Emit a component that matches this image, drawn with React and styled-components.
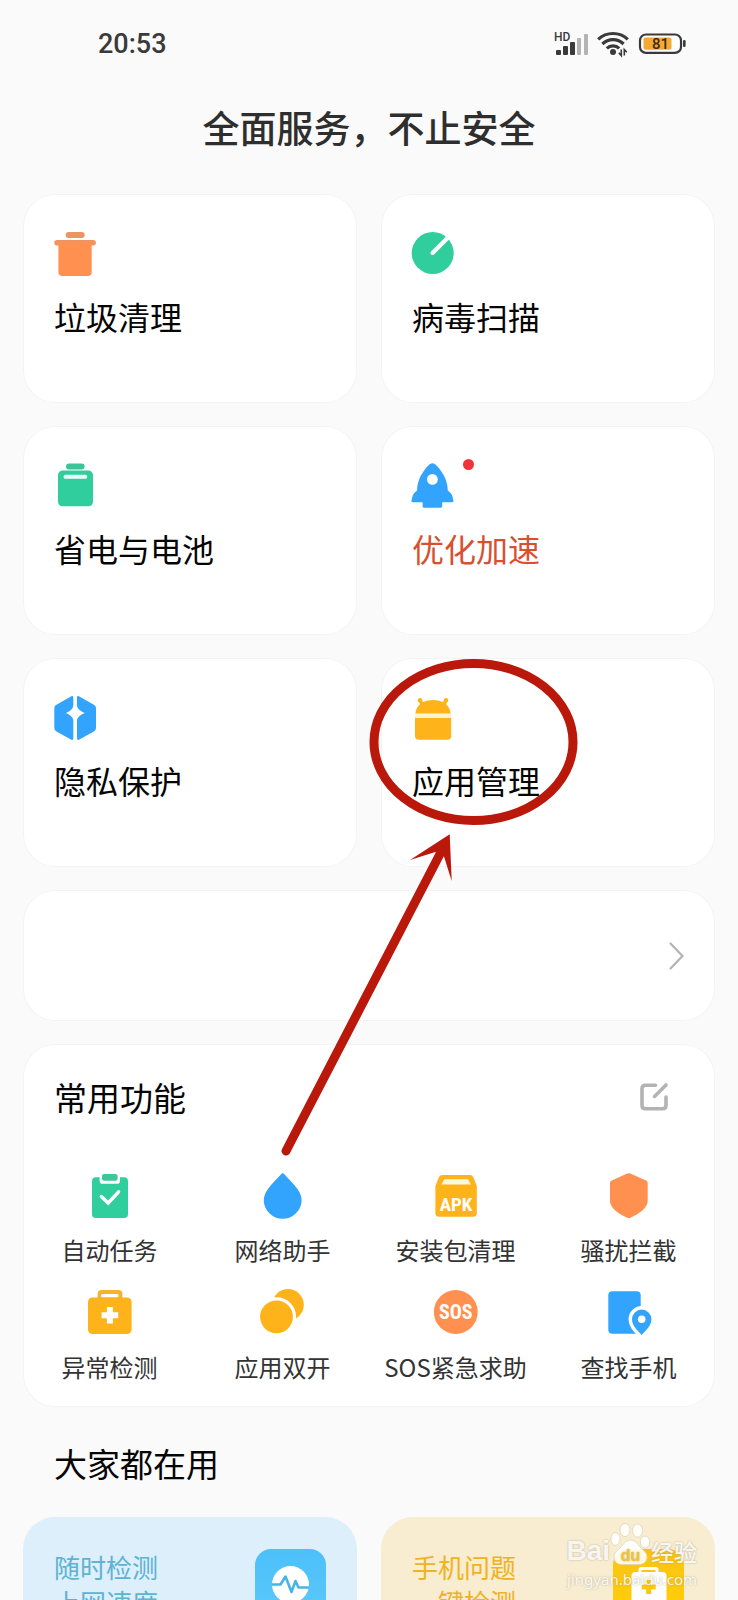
import React from "react";
import styled, { createGlobalStyle } from "styled-components";

const colors = {
  page: "#fafafa",
  card: "#ffffff",
  line: "#f3f3f3",
  ink: "#050505",
  label: "#333333",
  orange: "#ff904f",
  green: "#2fce9c",
  blue: "#33a4fd",
  yellow: "#ffb31a",
  grey: "#b3b3b3",
  mark: "#b9180b",
};

const GlobalStyle = createGlobalStyle`
  *, *::before, *::after { box-sizing: border-box; }
  body {
    margin: 0;
    background: ${colors.page};
    font-family: "Noto Sans CJK SC", sans-serif;
    color: ${colors.ink};
  }
  button { font: inherit; color: inherit; border: 0; background: none; padding: 0; cursor: pointer; }
  a { color: inherit; text-decoration: none; }
  svg { display: block; overflow: visible; }
`;

const Screen = styled.div`
  position: relative;
  height: 100vh;
  overflow: hidden;
  padding-top: 28px;
`;

const StatusBar = styled.header`
  display: flex;
  align-items: center;
  justify-content: space-between;
  height: 32px;
  padding: 0 52px 0 98px;
`;

const Clock = styled.time`
  font: 500 27px/32px Roboto, sans-serif;
  color: #3a3a3a;
`;

const StatusIcons = styled.div`
  display: flex;
  align-items: center;
  gap: 9px;
`;

const Title = styled.h1`
  margin: 41px 0;
  font-size: 37px;
  line-height: 52px;
  font-weight: 500;
  text-align: center;
  color: #2e2e2e;
`;

const Main = styled.main`
  position: relative;
  padding: 0 23px;
`;

const TileGrid = styled.div`
  display: grid;
  grid-template-columns: 1fr 1fr;
  gap: 23px 24px;
`;

const Tile = styled.button`
  display: flex;
  flex-direction: column;
  align-items: flex-start;
  gap: 17px;
  min-height: 209px;
  padding: 37px 31px;
  background: ${colors.card};
  box-shadow: inset 0 0 0 1px ${colors.line};
  border-radius: 32px;
  text-align: left;
`;

const TileIcon = styled.span`
  position: relative;
  width: 46px;
  height: 46px;
`;

const Dot = styled.span`
  position: absolute;
  left: 51px;
  top: -4px;
  width: 11px;
  height: 11px;
  border-radius: 50%;
  background: #f0343a;
`;

const TileLabel = styled.span`
  font-size: 32px;
  line-height: 44px;
  color: ${(p) => (p.$alert ? "#d8502f" : colors.ink)};
`;

const Banner = styled.a`
  display: flex;
  align-items: center;
  justify-content: flex-end;
  height: 131px;
  margin-top: 23px;
  padding: 0 31px;
  background: ${colors.card};
  box-shadow: inset 0 0 0 1px ${colors.line};
  border-radius: 32px;
`;

const Panel = styled.section`
  margin-top: 23px;
  padding: 31px 0 25px;
  background: ${colors.card};
  box-shadow: inset 0 0 0 1px ${colors.line};
  border-radius: 32px;
`;

const PanelHeader = styled.div`
  display: flex;
  align-items: center;
  justify-content: space-between;
  margin-bottom: 53px;
  padding: 0 47px 0 31px;
`;

const SectionTitle = styled.h2`
  margin: 0;
  font-size: 33px;
  line-height: 44px;
  font-weight: 400;
`;

const ShortcutGrid = styled.div`
  display: grid;
  grid-template-columns: repeat(4, 1fr);
  row-gap: 24px;
`;

const Shortcut = styled.button`
  display: flex;
  flex-direction: column;
  align-items: center;
  gap: 17px;
`;

const ShortcutLabel = styled.span`
  font-size: 24px;
  line-height: 30px;
  color: ${colors.label};
  white-space: nowrap;
`;

const PopularHeader = styled.div`
  padding: 34px 31px 32px;
`;

const PromoGrid = styled.div`
  display: grid;
  grid-template-columns: 1fr 1fr;
  gap: 24px;
`;

const Promo = styled.a`
  display: flex;
  justify-content: space-between;
  align-items: flex-start;
  padding: 32px 31px;
  min-height: 200px;
  border-radius: 32px;
  background: ${(p) => p.$background};
  color: ${(p) => p.$color};
`;

const PromoText = styled.span`
  font-size: 26px;
  line-height: 35px;
`;

const PromoIcon = styled.span`
  width: 71px;
  height: 71px;
  border-radius: 16px;
  background: ${(p) => p.$fill};
`;

const Annotation = styled.svg`
  position: absolute;
  left: 50%;
  top: 0;
  pointer-events: none;
`;

const Watermark = styled.div`
  position: absolute;
  right: 41px;
  bottom: 7px;
  display: flex;
  flex-direction: column;
  align-items: flex-end;
  color: rgba(255, 255, 255, 0.9);
  text-shadow: 0 0 2px rgba(150, 140, 110, 0.7);
  pointer-events: none;
`;

const WatermarkRow = styled.div`
  display: flex;
  align-items: flex-end;
`;

const WatermarkLatin = styled.span`
  font: 700 28px/28px "Liberation Sans", sans-serif;
`;

const WatermarkHan = styled.span`
  font-size: 23px;
  line-height: 28px;
  font-weight: 500;
`;

const WatermarkUrl = styled.span`
  font: 400 15px/28px "Noto Sans", sans-serif;
`;

function Signal() {
  return (
    <svg width="34" height="24" viewBox="0 0 34 24" role="img" aria-label="HD">
      <text x="0" y="9" fontFamily="Roboto, sans-serif" fontSize="12" fontWeight="500" fill="#3a3a3a">HD</text>
      <g fill="#3a3a3a">
        <rect x="2" y="18" width="5" height="5" rx="1" />
        <rect x="9" y="14" width="5" height="9" rx="1" />
        <rect x="16" y="10" width="5" height="13" rx="1" />
      </g>
      <g fill="#b4b4b4">
        <rect x="23" y="6" width="4" height="17" rx="1" />
        <rect x="30" y="2" width="4" height="21" rx="1" />
      </g>
    </svg>
  );
}

function Wifi() {
  return (
    <svg width="32" height="24" viewBox="0 0 32 24" aria-hidden="true">
      <g fill="none" stroke="#3a3a3a" strokeWidth="3.2">
        <path d="M1.2 7.4 A21.5 21.5 0 0 1 30.8 7.4" />
        <path d="M5.4 12 A15 15 0 0 1 26.6 12" />
        <path d="M9.8 16.4 A8.8 8.8 0 0 1 22.2 16.4" />
      </g>
      <circle cx="16" cy="20" r="3" fill="#3a3a3a" />
      <path d="M24.3 17.5 V23.6 L21.8 20.8 M27.3 23.6 V17.5 L29.8 20.3" fill="none" stroke="#3a3a3a" strokeWidth="1.6" />
    </svg>
  );
}

function Battery() {
  return (
    <svg width="48" height="22" viewBox="0 0 48 22" role="img" aria-label="81">
      <rect x="2" y="1.5" width="41" height="18.4" rx="6" fill="#fff" stroke="#3a3a3a" strokeWidth="2.2" />
      <rect x="5.5" y="4.6" width="28" height="12.2" rx="2" fill="#f4a935" />
      <rect x="45" y="7" width="2.6" height="7" rx="1.2" fill="#3a3a3a" />
      <text x="22.5" y="16" textAnchor="middle" fontFamily="Roboto, sans-serif" fontSize="15" fontWeight="500" fill="#3c2a10">81</text>
    </svg>
  );
}

const Icon46 = ({ children }) => (
  <svg width="46" height="46" viewBox="0 0 46 46" aria-hidden="true">{children}</svg>
);

const Trash = () => (
  <Icon46>
    <rect x="11.7" y="1" width="19" height="6" rx="3" fill="#ee9363" />
    <rect x="0.3" y="9" width="41.6" height="5.5" rx="2.7" fill="#f2935f" />
    <path d="M4.4 12 H37.7 V41 Q37.7 45 33.7 45 H8.4 Q4.4 45 4.4 41 Z" fill={colors.orange} />
  </Icon46>
);

const Scan = () => (
  <Icon46>
    <circle cx="20.7" cy="22" r="21" fill={colors.green} />
    <path d="M20.5 22 L38 4.5" stroke="#fff" strokeWidth="4.2" />
    <circle cx="20.5" cy="22" r="2.1" fill="#fff" />
  </Icon46>
);

const Power = () => (
  <Icon46>
    <rect x="12" y="0.5" width="18.6" height="6" rx="3" fill="#3bc495" />
    <rect x="4" y="7.6" width="35" height="35.6" rx="4.5" fill={colors.green} />
    <rect x="9.7" y="11.7" width="23.4" height="4" rx="1.5" fill="#e8fff7" />
  </Icon46>
);

const Rocket = () => (
  <Icon46>
    <path
      d="M20.4 0.3 C22 0.3 24 1.6 26.6 4.8 C32.5 12 35.6 19 35.8 27.5 C38.5 29.5 40 31 40.6 34 L41.5 38 Q41.4 39.2 40 39.2 H30.2 V43.4 Q30 44.7 28.6 44.7 H12 Q10.7 44.7 10.6 43.4 V39.2 H0.8 Q-0.7 39.2 -0.6 38 L0.3 34 C0.9 31 2.4 29.5 5.1 27.5 C5.3 19 8.3 12 14.2 4.8 C16.8 1.6 18.8 0.3 20.4 0.3 Z"
      fill={colors.blue}
    />
    <circle cx="20.4" cy="16.4" r="5.4" fill="#fff" />
  </Icon46>
);

const Privacy = () => (
  <Icon46>
    <g fill={colors.blue}>
      <path d="M19.3 2 V11 Q18.6 15 12 18 Q18.6 21 19.3 25 V43.8 Q19 45.4 17.4 44.8 L2 36.2 Q0.3 35 0.3 33 V13 Q0.3 11 2 10 L17.4 1.2 Q19 0.6 19.3 2 Z" />
      <path d="M23 2 V11 Q23.7 15 30.7 18 Q23.7 21 23 25 V43.8 Q23.3 45.4 24.9 44.8 L40.3 36.2 Q42 35 42 33 V13 Q42 11 40.3 10 L24.9 1.2 Q23.3 0.6 23 2 Z" />
    </g>
  </Icon46>
);

const Android = () => (
  <Icon46>
    <g fill={colors.yellow}>
      <path d="M3.3 18.7 C3.6 14 6 10.5 9.5 8 C16 4 26 4 32.5 8 C36 10.5 38.4 14 38.7 18.7 Z" />
      <path d="M3 22.7 H39.2 V41 Q39.2 44.8 35.4 44.8 H6.8 Q3 44.8 3 41 Z" />
      <circle cx="8" cy="5.2" r="2.2" />
      <circle cx="34" cy="5.2" r="2.2" />
    </g>
    <path d="M8 5.2 L10.5 10 M34 5.2 L31.5 10" stroke={colors.yellow} strokeWidth="3.6" />
    <rect x="3" y="18.7" width="36.2" height="4" fill="#fff3d3" />
  </Icon46>
);

const Tasks = () => (
  <Icon46>
    <rect x="5" y="5.3" width="36" height="40.6" rx="4" fill={colors.green} />
    <path d="M12.6 4.5 H33 V8.7 Q33 11.8 30 11.8 H15.6 Q12.6 11.8 12.6 8.7 Z" fill="#fff" />
    <rect x="15" y="2" width="15.6" height="6.8" rx="2" fill="#3cc798" />
    <path d="M14.3 24.5 L21.2 31 L31.6 19.8" fill="none" stroke="#fff" strokeWidth="3.4" strokeLinecap="round" />
  </Icon46>
);

const Drop = () => (
  <Icon46>
    <path
      d="M22.7 1.3 Q23.5 1.3 24.3 2.2 C29 7 34 12 37.8 17.5 C40.4 21.5 41.6 24.5 41.6 28.2 A18.9 18.6 0 0 1 3.8 28.2 C3.8 24.5 5 21.5 7.6 17.5 C11.4 12 16.4 7 21.1 2.2 Q21.9 1.3 22.7 1.3 Z"
      fill={colors.blue}
    />
  </Icon46>
);

const badgeText = {
  fontFamily: '"Liberation Sans Narrow", "Roboto Condensed", "Liberation Sans", sans-serif',
  fontWeight: 700,
  fill: "#fff",
  textAnchor: "middle",
};

const Apk = () => (
  <Icon46>
    <path d="M9.5 3 H36.8 Q39.4 3 40.3 5 L43.8 14 V41 Q43.8 44.8 40 44.8 H6.2 Q2.4 44.8 2.4 41 V14 L6 5 Q6.9 3 9.5 3 Z" fill={colors.yellow} />
    <path d="M11.3 7.2 H35 L38 12.4 H8.3 Z" fill="#fff7dc" />
    <text x="23" y="39" fontSize="19" {...badgeText}>APK</text>
  </Icon46>
);

const Shield = () => (
  <Icon46>
    <path d="M21.2 1.6 Q22.8 0.8 24.4 1.6 L40 8.4 Q41.7 9.2 41.7 11 V29 C41.7 35.5 34 41.5 24.4 45.8 Q22.8 46.6 21.2 45.8 C11.6 41.5 4 35.5 4 29 V11 Q4 9.2 5.7 8.4 Z" fill={colors.orange} />
  </Icon46>
);

const Medkit = () => (
  <Icon46>
    <rect x="1" y="8.4" width="43.6" height="36.6" rx="4.5" fill={colors.yellow} />
    <path d="M10.6 10 V5 Q10.6 1 14.6 1 H31.4 Q35.4 1 35.4 5 V10 Z" fill="#f5b22a" />
    <rect x="14.2" y="5" width="17.2" height="3.2" rx="1" fill="#fff" />
    <path d="M22.9 18 V34.6 M14.6 26.3 H31.2" stroke="#fff" strokeWidth="6" />
  </Icon46>
);

const Clone = () => (
  <Icon46>
    <circle cx="28" cy="15.8" r="15.8" fill={colors.yellow} />
    <circle cx="16.5" cy="27.8" r="19.6" fill="#fff" />
    <circle cx="16.5" cy="27.8" r="16.4" fill={colors.yellow} />
  </Icon46>
);

const Sos = () => (
  <Icon46>
    <circle cx="22.8" cy="23" r="21.9" fill={colors.orange} />
    <text x="22.8" y="30" fontSize="20" {...badgeText}>SOS</text>
  </Icon46>
);

const FindPhone = () => (
  <Icon46>
    <rect x="2.3" y="2.3" width="32.4" height="42.4" rx="4" fill={colors.blue} />
    <path
      d="M35.7 46 C31 41 26 36.5 26 30.3 A9.7 9.7 0 0 1 45.4 30.3 C45.4 36.5 40.4 41 35.7 46 Z"
      fill={colors.blue}
      stroke="#fff"
      strokeWidth="7"
      paintOrder="stroke"
    />
    <circle cx="35.7" cy="30.3" r="3.8" fill="#fff" />
  </Icon46>
);

const NetPulse = () => (
  <svg width="71" height="71" viewBox="0 0 71 71" aria-hidden="true">
    <circle cx="35.5" cy="35.5" r="18.5" fill="#fff" />
    <path d="M17 35.5 H25.5 L30.5 27.5 L36.5 43 L40.5 32 L43.5 38.5 H54" fill="none" stroke="#48b4e4" strokeWidth="2.6" strokeLinejoin="round" />
  </svg>
);

const PhoneKit = () => (
  <svg width="71" height="71" viewBox="0 0 71 71" aria-hidden="true">
    <rect x="18.5" y="23" width="35" height="34" rx="4" fill="#fff" />
    <path d="M27 24 V21 Q27 19.5 28.5 19.5 H42.5 Q44 19.5 44 21 V24" fill="none" stroke="#fff" strokeWidth="3" />
    <path d="M35.7 31 V45 M28.7 38 H42.7" stroke="#fac80c" strokeWidth="5" />
  </svg>
);

const EditIcon = () => (
  <svg width="28" height="28" viewBox="0 0 28 28" fill="none" stroke={colors.grey} strokeWidth="3.6" strokeLinecap="round" strokeLinejoin="round">
    <path d="M15.5 2.2 H5.5 Q2 2.2 2 5.7 V22.3 Q2 25.8 5.5 25.8 H22.5 Q26 25.8 26 22.3 V14" />
    <path d="M14.5 13.5 L26 2" />
  </svg>
);

const tiles = [
  { label: "垃圾清理", icon: <Trash /> },
  { label: "病毒扫描", icon: <Scan /> },
  { label: "省电与电池", icon: <Power /> },
  { label: "优化加速", icon: <Rocket />, alert: true },
  { label: "隐私保护", icon: <Privacy /> },
  { label: "应用管理", icon: <Android /> },
];

const shortcuts = [
  { label: "自动任务", icon: <Tasks /> },
  { label: "网络助手", icon: <Drop /> },
  { label: "安装包清理", icon: <Apk /> },
  { label: "骚扰拦截", icon: <Shield /> },
  { label: "异常检测", icon: <Medkit /> },
  { label: "应用双开", icon: <Clone /> },
  { label: "SOS紧急求助", icon: <Sos /> },
  { label: "查找手机", icon: <FindPhone /> },
];

export default function App() {
  return (
    <Screen>
      <GlobalStyle />
      <StatusBar>
        <Clock>20:53</Clock>
        <StatusIcons>
          <Signal />
          <Wifi />
          <Battery />
        </StatusIcons>
      </StatusBar>
      <Title>全面服务，不止安全</Title>
      <Main>
        <TileGrid>
          {tiles.map((t) => (
            <Tile key={t.label} type="button">
              <TileIcon>
                {t.icon}
                {t.alert && <Dot />}
              </TileIcon>
              <TileLabel $alert={t.alert}>{t.label}</TileLabel>
            </Tile>
          ))}
        </TileGrid>
        <Banner href="#more" aria-label="更多">
          <svg width="15" height="28" viewBox="0 0 15 28" fill="none" stroke={colors.grey} strokeWidth="2.2" strokeLinecap="round">
            <path d="M1.5 1.5 L13.5 14 L1.5 26.5" />
          </svg>
        </Banner>
        <Panel>
          <PanelHeader>
            <SectionTitle>常用功能</SectionTitle>
            <button type="button" aria-label="编辑">
              <EditIcon />
            </button>
          </PanelHeader>
          <ShortcutGrid>
            {shortcuts.map((s) => (
              <Shortcut key={s.label} type="button">
                {s.icon}
                <ShortcutLabel>{s.label}</ShortcutLabel>
              </Shortcut>
            ))}
          </ShortcutGrid>
        </Panel>
        <PopularHeader>
          <SectionTitle>大家都在用</SectionTitle>
        </PopularHeader>
        <PromoGrid>
          <Promo href="#speed" $background="#ddeffa" $color="#5cb3d3">
            <PromoText>随时检测<br />上网速度</PromoText>
            <PromoIcon $fill="linear-gradient(#4cc0fb, #5cc8f8)"><NetPulse /></PromoIcon>
          </Promo>
          <Promo href="#check" $background="#f8edd1" $color="#f0b223">
            <PromoText>手机问题<br />一键检测</PromoText>
            <PromoIcon $fill="linear-gradient(#fbc312, #ffd008)"><PhoneKit /></PromoIcon>
          </Promo>
        </PromoGrid>
        <Annotation width="200" height="970" viewBox="369 194 200 970" aria-hidden="true">
          <ellipse cx="473.5" cy="742" rx="99.5" ry="78.5" fill="none" stroke={colors.mark} strokeWidth="9" />
          <path d="M286 1151 L440 854" stroke={colors.mark} strokeWidth="9" strokeLinecap="round" />
          <path d="M449.7 834.3 L410 860 L435.3 852 L444 856.5 L451.7 881 Z" fill={colors.mark} />
        </Annotation>
      </Main>
      <Watermark>
        <WatermarkRow>
          <WatermarkLatin>Bai</WatermarkLatin>
          <svg width="41" height="42" viewBox="0 0 41 42" aria-hidden="true">
            <g fill="rgba(255,255,255,0.9)" stroke="#ddd3b8" strokeWidth="0.8">
              <ellipse cx="5.5" cy="16" rx="4.6" ry="6.4" />
              <ellipse cx="15" cy="7" rx="5" ry="6.6" />
              <ellipse cx="27.5" cy="7.6" rx="5" ry="6.6" />
              <ellipse cx="35" cy="19" rx="4.8" ry="6" />
              <path d="M20.5 17 C26 17 28 22 31 25 C34 28 37 30 37 34 C37 39 33 41.5 29 41.5 H12 C7 41.5 4 38.5 4 34 C4 30 7 28 10 25 C13 22 15 17 20.5 17 Z" />
            </g>
            <text x="20.5" y="38" textAnchor="middle" fontFamily="Liberation Sans, sans-serif" fontSize="16" fontWeight="700" fill="#f0c531">du</text>
          </svg>
          <WatermarkHan>经验</WatermarkHan>
        </WatermarkRow>
        <WatermarkUrl>jingyan.baidu.com</WatermarkUrl>
      </Watermark>
    </Screen>
  );
}
